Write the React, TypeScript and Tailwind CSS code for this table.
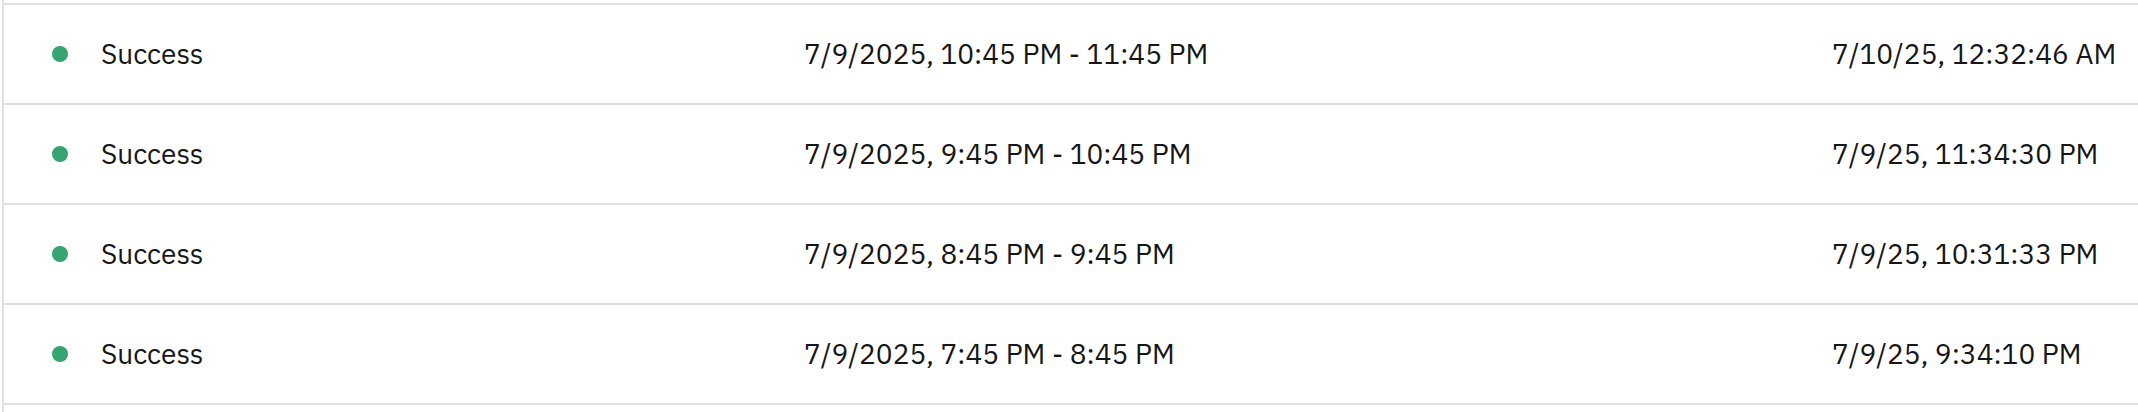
import React from 'react';

const runs = [
  { status: 'Success', window: '7/9/2025, 10:45 PM - 11:45 PM', finished: '7/10/25, 12:32:46 AM' },
  { status: 'Success', window: '7/9/2025, 9:45 PM - 10:45 PM', finished: '7/9/25, 11:34:30 PM' },
  { status: 'Success', window: '7/9/2025, 8:45 PM - 9:45 PM', finished: '7/9/25, 10:31:33 PM' },
  { status: 'Success', window: '7/9/2025, 7:45 PM - 8:45 PM', finished: '7/9/25, 9:34:10 PM' },
];

export default function App() {
  return (
    <div className="min-h-[412px] w-full bg-white pl-[2px] font-['IBM_Plex_Sans','Inter',sans-serif] text-[28px] text-[#161616]">
      <div className="min-h-[412px] border-l-2 border-[#e0e0e0] pt-[3px]">
        {runs.map((run, i) => (
          <div
            key={i}
            className={`grid h-[100px] grid-cols-[800px_1028px_1fr] items-center border-t-2 border-[#e0e0e0] ${
              i === runs.length - 1 ? 'h-[102px] border-b-2' : ''
            }`}
          >
            {/* Status */}
            <div className="flex items-center pl-[48px]">
              <span className="h-[16px] w-[16px] rounded-full bg-[#36a56f]" />
              <span className="ml-[33px]">{run.status}</span>
            </div>
            {/* Window */}
            <div>{run.window}</div>
            {/* Finished */}
            <div>{run.finished}</div>
          </div>
        ))}
      </div>
    </div>
  );
}
